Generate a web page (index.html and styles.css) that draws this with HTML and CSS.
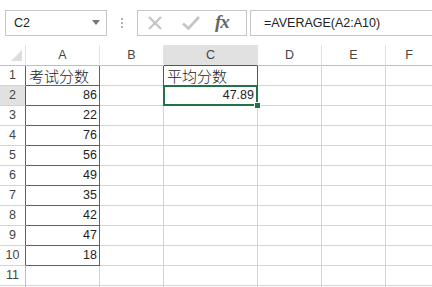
FILE: index.html
```html
<!DOCTYPE html>
<html lang="zh">
<head>
    <meta charset="UTF-8">
    <meta name="viewport" content="width=device-width, initial-scale=1.0">
    <title>Excel - AVERAGE</title>
    <link rel="stylesheet" href="styles.css">
</head>
<body>
    <div class="formula-bar">
        <div class="name-box">
            <span>C2</span>
            <svg class="drop" width="8" height="5" viewBox="0 0 8 5"><path d="M0 0H8L4 5Z" fill="#777"/></svg>
        </div>
        <div class="grip"><i></i><i></i><i></i></div>
        <div class="fx-buttons">
            <svg class="btn-x" width="16" height="16" viewBox="0 0 16 16"><path d="M2 2L14 14M14 2L2 14" stroke="#c4c4c4" stroke-width="2.2"/></svg>
            <svg class="btn-ok" width="18" height="16" viewBox="0 0 18 16"><path d="M1 8.5L6.5 13.5L17 2" fill="none" stroke="#c4c4c4" stroke-width="2.6"/></svg>
            <span class="fx">fx</span>
        </div>
        <div class="formula-input">=AVERAGE(A2:A10)</div>
    </div>

    <div class="sheet">
        <div class="hd corner"><svg width="11" height="11" viewBox="0 0 11 11"><path d="M11 0V11H0Z" fill="#dcdcdc"/></svg></div>
        <div class="hd">A</div>
        <div class="hd">B</div>
        <div class="hd sel-col">C</div>
        <div class="hd">D</div>
        <div class="hd">E</div>
        <div class="hd last">F</div>

        <div class="rh in-a">1</div>
        <div class="cell a"><span class="cjk">考试分数</span></div>
        <div class="cell to-c1"></div>
        <div class="cell c1"><span class="cjk">平均分数</span></div>
        <div class="cell"></div>
        <div class="cell"></div>
        <div class="cell last"></div>

        <div class="rh sel-row">2</div>
        <div class="cell a num">86</div>
        <div class="cell"></div>
        <div class="cell num active">47.89<span class="frame"></span><span class="handle"></span></div>
        <div class="cell"></div>
        <div class="cell"></div>
        <div class="cell last"></div>

        <div class="rh in-a">3</div>
        <div class="cell a num">22</div>
        <div class="cell"></div><div class="cell"></div><div class="cell"></div><div class="cell"></div><div class="cell last"></div>

        <div class="rh in-a">4</div>
        <div class="cell a num">76</div>
        <div class="cell"></div><div class="cell"></div><div class="cell"></div><div class="cell"></div><div class="cell last"></div>

        <div class="rh in-a">5</div>
        <div class="cell a num">56</div>
        <div class="cell"></div><div class="cell"></div><div class="cell"></div><div class="cell"></div><div class="cell last"></div>

        <div class="rh in-a">6</div>
        <div class="cell a num">49</div>
        <div class="cell"></div><div class="cell"></div><div class="cell"></div><div class="cell"></div><div class="cell last"></div>

        <div class="rh in-a">7</div>
        <div class="cell a num">35</div>
        <div class="cell"></div><div class="cell"></div><div class="cell"></div><div class="cell"></div><div class="cell last"></div>

        <div class="rh in-a">8</div>
        <div class="cell a num">42</div>
        <div class="cell"></div><div class="cell"></div><div class="cell"></div><div class="cell"></div><div class="cell last"></div>

        <div class="rh in-a">9</div>
        <div class="cell a num">47</div>
        <div class="cell"></div><div class="cell"></div><div class="cell"></div><div class="cell"></div><div class="cell last"></div>

        <div class="rh in-a">10</div>
        <div class="cell a num">18</div>
        <div class="cell"></div><div class="cell"></div><div class="cell"></div><div class="cell"></div><div class="cell last"></div>

        <div class="rh">11</div>
        <div class="cell"></div><div class="cell"></div><div class="cell"></div><div class="cell"></div><div class="cell"></div><div class="cell last"></div>

        <div class="rh"></div>
        <div class="cell"></div><div class="cell"></div><div class="cell"></div><div class="cell"></div><div class="cell"></div><div class="cell last"></div>
    </div>
</body>
</html>
```

FILE: styles.css
```css
body {
    margin: 0;
    width: 432px;
    height: 287px;
    overflow: hidden;
    background: #fff;
    font-family: "Liberation Sans", Arial, sans-serif;
    color: #222;
}

/* formula bar */
.formula-bar {
    height: 45px;
    display: flex;
    align-items: flex-start;
    padding-top: 10px;
    box-sizing: border-box;
}

.name-box {
    margin-left: 5px;
    width: 102px;
    height: 26px;
    box-sizing: border-box;
    border: 1px solid #c6c6c6;
    display: flex;
    align-items: center;
    justify-content: space-between;
    padding: 0 6px 0 8px;
    font-size: 12.5px;
    color: #222;
}

.drop {
    margin-bottom: 2px;
}

.grip {
    width: 30px;
    height: 26px;
    display: flex;
    flex-direction: column;
    align-items: center;
    justify-content: center;
    gap: 2px;
}

.grip i {
    width: 2px;
    height: 2px;
    background: #b0b0b0;
}

.fx-buttons {
    width: 110px;
    height: 26px;
    box-sizing: border-box;
    border: 1px solid #c6c6c6;
    display: flex;
    align-items: center;
    padding-left: 9px;
}

.btn-ok {
    margin-left: 19px;
}

.fx {
    margin-left: 15px;
    font-family: "Liberation Serif", "Times New Roman", serif;
    font-style: italic;
    font-weight: bold;
    font-size: 19px;
    color: #666;
    letter-spacing: -1px;
    line-height: 1;
    margin-bottom: 3px;
}

.formula-input {
    margin-left: 3px;
    flex: 1;
    height: 26px;
    box-sizing: border-box;
    border: 1px solid #c6c6c6;
    border-right: none;
    padding-left: 13px;
    font-size: 12.5px;
    line-height: 24px;
    color: #222;
}

/* grid */
.sheet {
    display: grid;
    grid-template-columns: 26px 74px 64px 94px 64px 64px 1fr;
    grid-template-rows: 21px repeat(11, 20px) 2px;
}

.sheet > div {
    box-sizing: border-box;
    border-right: 1px solid #d4d4d4;
    border-bottom: 1px solid #d4d4d4;
}

.hd {
    background: #fff;
    font-size: 12.5px;
    color: #444;
    text-align: center;
    line-height: 20px;
    border-right-color: #e2e2e2 !important;
    border-bottom-color: #bfbfbf !important;
}

.corner {
    display: flex;
    justify-content: flex-end;
    align-items: flex-end;
    padding: 0 3px 4px 0;
}

.sel-col {
    background: #e1e1e1;
    border-bottom-color: #217346 !important;
}

.rh {
    font-size: 12.5px;
    color: #444;
    text-align: center;
    line-height: 19px;
    border-right-color: #bfbfbf !important;
}

.rh.in-a {
    border-right-color: #2f6e9d !important;
}

.rh.sel-row {
    background: #e1e1e1;
    border-right-color: #217346 !important;
}

.cell {
    font-size: 12.5px;
    line-height: 19px;
    white-space: nowrap;
    overflow: visible;
}

.cell.a {
    border-right-color: #2f6e9d;
    border-bottom-color: #2f6e9d;
}

.num {
    text-align: right;
    padding-right: 2px;
}

.cjk {
    font-family: "Noto Sans CJK SC", sans-serif;
    font-size: 15px;
    font-weight: 300;
    line-height: 19px;
    padding-left: 3px;
    color: #222;
}

.to-c1 {
    border-right-color: #217346 !important;
}

.c1 {
    border-right-color: #217346 !important;
}

.active {
    position: relative;
    padding-right: 3px;
}

.frame {
    position: absolute;
    left: -1px;
    top: -1px;
    right: -1px;
    bottom: -1px;
    border: 2px solid #217346;
}

.handle {
    position: absolute;
    right: -4px;
    bottom: -4px;
    width: 5px;
    height: 5px;
    background: #217346;
    border: 1px solid #fff;
}

.last {
    border-right: none !important;
}
```
